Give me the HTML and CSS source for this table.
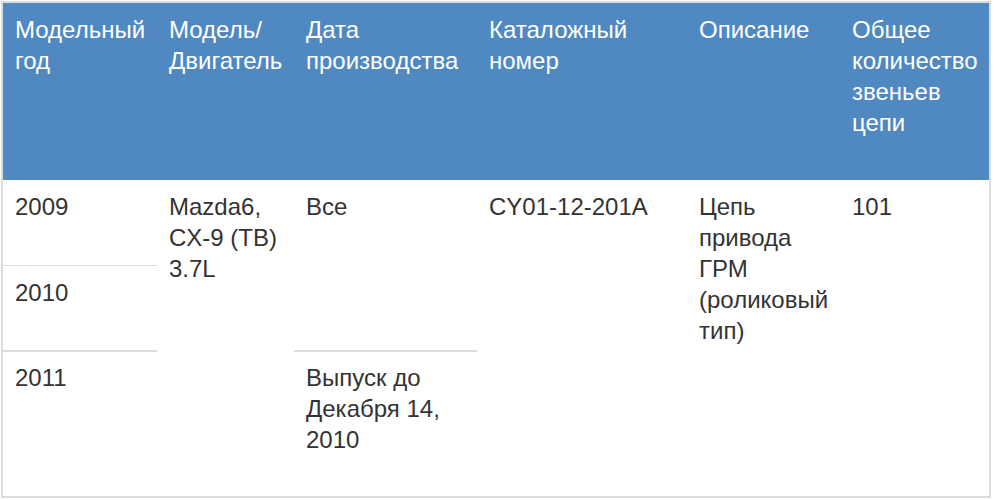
FILE: index.html
```html
<!DOCTYPE html>
<html lang="ru">
<head>
<meta charset="utf-8">
<title>Цепь привода ГРМ</title>
<link rel="stylesheet" href="styles.css">
</head>
<body>
<div class="wrap">
<table class="parts">
  <colgroup>
    <col class="c1"><col class="c2"><col class="c3"><col class="c4"><col class="c5"><col class="c6">
  </colgroup>
  <thead>
    <tr>
      <th>Модельный год</th>
      <th>Модель/<wbr>Двигатель</th>
      <th>Дата производства</th>
      <th>Каталожный номер</th>
      <th>Описание</th>
      <th>Общее количество звеньев цепи</th>
    </tr>
  </thead>
  <tbody>
    <tr>
      <td class="first">2009</td>
      <td rowspan="3">Mazda6, CX-9 (TB) 3.7L</td>
      <td rowspan="2">Все</td>
      <td rowspan="3">CY01-12-201A</td>
      <td rowspan="3">Цепь привода ГРМ (роликовый тип)</td>
      <td rowspan="3">101</td>
    </tr>
    <tr>
      <td class="sep1">2010</td>
    </tr>
    <tr>
      <td class="sep2">2011</td>
      <td class="sep2">Выпуск до Декабря 14, 2010</td>
    </tr>
  </tbody>
</table>
</div>
</body>
</html>
```
FILE: styles.css
```css
html, body {
  margin: 0;
  padding: 0;
  background: #ffffff;
}
.wrap {
  padding: 1px 0 0 1px;
}
.parts {
  width: 990px;
  border: 2px solid #dcdcdc;
  border-collapse: separate;
  border-spacing: 0;
  table-layout: fixed;
  font-family: "Liberation Sans", Arial, sans-serif;
  font-size: 24px;
  line-height: 31px;
  color: #333333;
}
.c1 { width: 154px; }
.c2 { width: 137px; }
.c3 { width: 183px; }
.c4 { width: 210px; }
.c5 { width: 153px; }
.c6 { width: 149px; }
.parts th {
  background: #5088c1;
  color: #ffffff;
  font-weight: normal;
  text-align: left;
  vertical-align: top;
  padding: 11px 4px 42px 12px;
}
.parts td {
  text-align: left;
  vertical-align: top;
  padding: 11px 4px 42px 12px;
}
.parts td.first {
  padding-bottom: 43px;
}
.parts td.sep1 {
  border-top: 1px solid #dcdcdc;
}
.parts td.sep2 {
  border-top: 2px solid #dcdcdc;
  padding-top: 10px;
  padding-bottom: 41px;
}
```
